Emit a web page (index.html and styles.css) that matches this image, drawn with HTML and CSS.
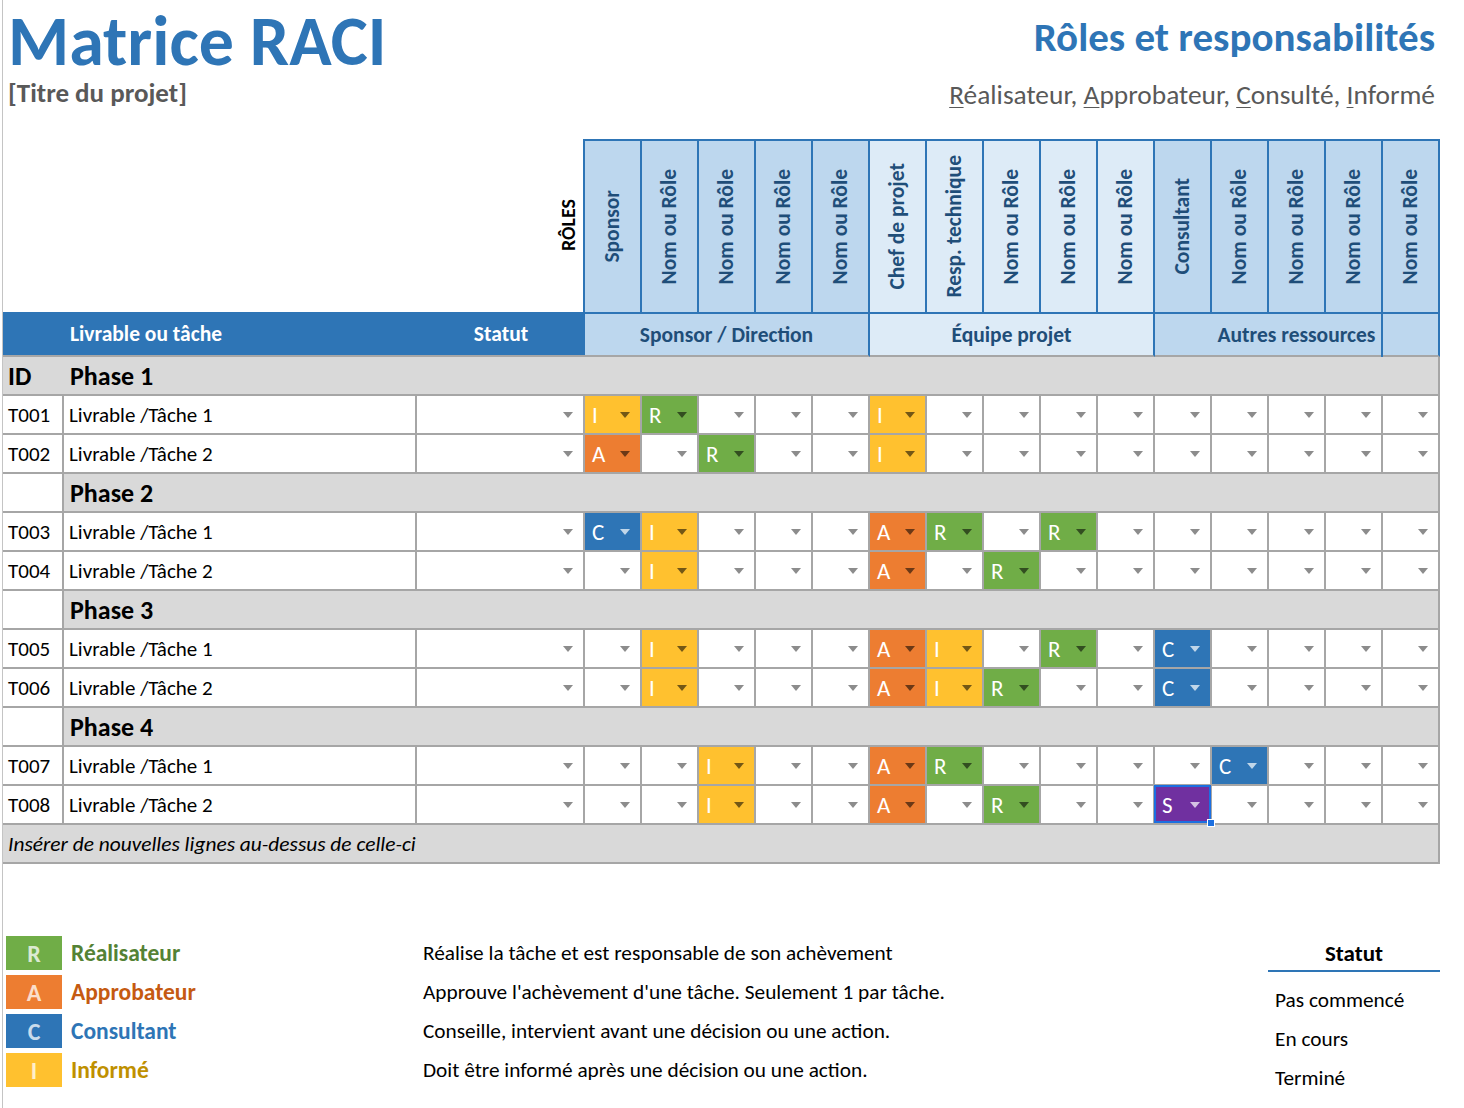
FILE: index.html
```html
<!DOCTYPE html>
<html lang="fr">
<head>
<meta charset="utf-8">
<title>Matrice RACI</title>
<link rel="stylesheet" href="styles.css">
</head>
<body>
<div class="page">
  <header class="top">
    <div class="top-left">
      <h1 class="title">Matrice RACI</h1>
      <div class="project">[Titre du projet]</div>
    </div>
    <div class="top-right">
      <h2 class="subtitle">Rôles et responsabilités</h2>
      <div class="raci-words"><u>R</u>éalisateur, <u>A</u>pprobateur, <u>C</u>onsulté, <u>I</u>nformé</div>
    </div>
  </header>

  <div class="matrix">
    <!-- role header row -->
    <div class="corner"><span class="roles-label">RÔLES</span></div>
    <div class="rh dark"><span>Sponsor</span></div>
    <div class="rh dark"><span>Nom ou Rôle</span></div>
    <div class="rh dark"><span>Nom ou Rôle</span></div>
    <div class="rh dark"><span>Nom ou Rôle</span></div>
    <div class="rh dark"><span>Nom ou Rôle</span></div>
    <div class="rh light"><span>Chef de projet</span></div>
    <div class="rh light"><span>Resp. technique</span></div>
    <div class="rh light"><span>Nom ou Rôle</span></div>
    <div class="rh light"><span>Nom ou Rôle</span></div>
    <div class="rh light"><span>Nom ou Rôle</span></div>
    <div class="rh dark"><span>Consultant</span></div>
    <div class="rh dark"><span>Nom ou Rôle</span></div>
    <div class="rh dark"><span>Nom ou Rôle</span></div>
    <div class="rh dark"><span>Nom ou Rôle</span></div>
    <div class="rh dark"><span>Nom ou Rôle</span></div>

    <!-- group row -->
    <div class="bluebar">
      <span></span>
      <span class="bb-task">Livrable ou tâche</span>
      <span class="bb-status">Statut</span>
    </div>
    <div class="grp dark">Sponsor / Direction</div>
    <div class="grp light">Équipe projet</div>
    <div class="grp dark split">Autres ressources</div>

    <!-- Phase 1 -->
    <div class="pid">ID</div>
    <div class="ph">Phase 1</div>

    <div class="c id">T001</div><div class="c task">Livrable /Tâche 1</div><div class="c dd"></div>
    <div class="c dd i">I</div><div class="c dd r">R</div><div class="c dd"></div><div class="c dd"></div><div class="c dd"></div>
    <div class="c dd i">I</div><div class="c dd"></div><div class="c dd"></div><div class="c dd"></div><div class="c dd"></div>
    <div class="c dd"></div><div class="c dd"></div><div class="c dd"></div><div class="c dd"></div><div class="c dd"></div>

    <div class="c id">T002</div><div class="c task">Livrable /Tâche 2</div><div class="c dd"></div>
    <div class="c dd a">A</div><div class="c dd"></div><div class="c dd r">R</div><div class="c dd"></div><div class="c dd"></div>
    <div class="c dd i">I</div><div class="c dd"></div><div class="c dd"></div><div class="c dd"></div><div class="c dd"></div>
    <div class="c dd"></div><div class="c dd"></div><div class="c dd"></div><div class="c dd"></div><div class="c dd"></div>

    <!-- Phase 2 -->
    <div class="pid blank"></div>
    <div class="ph">Phase 2</div>

    <div class="c id">T003</div><div class="c task">Livrable /Tâche 1</div><div class="c dd"></div>
    <div class="c dd cc">C</div><div class="c dd i">I</div><div class="c dd"></div><div class="c dd"></div><div class="c dd"></div>
    <div class="c dd a">A</div><div class="c dd r">R</div><div class="c dd"></div><div class="c dd r">R</div><div class="c dd"></div>
    <div class="c dd"></div><div class="c dd"></div><div class="c dd"></div><div class="c dd"></div><div class="c dd"></div>

    <div class="c id">T004</div><div class="c task">Livrable /Tâche 2</div><div class="c dd"></div>
    <div class="c dd"></div><div class="c dd i">I</div><div class="c dd"></div><div class="c dd"></div><div class="c dd"></div>
    <div class="c dd a">A</div><div class="c dd"></div><div class="c dd r">R</div><div class="c dd"></div><div class="c dd"></div>
    <div class="c dd"></div><div class="c dd"></div><div class="c dd"></div><div class="c dd"></div><div class="c dd"></div>

    <!-- Phase 3 -->
    <div class="pid blank"></div>
    <div class="ph">Phase 3</div>

    <div class="c id">T005</div><div class="c task">Livrable /Tâche 1</div><div class="c dd"></div>
    <div class="c dd"></div><div class="c dd i">I</div><div class="c dd"></div><div class="c dd"></div><div class="c dd"></div>
    <div class="c dd a">A</div><div class="c dd i">I</div><div class="c dd"></div><div class="c dd r">R</div><div class="c dd"></div>
    <div class="c dd cc">C</div><div class="c dd"></div><div class="c dd"></div><div class="c dd"></div><div class="c dd"></div>

    <div class="c id">T006</div><div class="c task">Livrable /Tâche 2</div><div class="c dd"></div>
    <div class="c dd"></div><div class="c dd i">I</div><div class="c dd"></div><div class="c dd"></div><div class="c dd"></div>
    <div class="c dd a">A</div><div class="c dd i">I</div><div class="c dd r">R</div><div class="c dd"></div><div class="c dd"></div>
    <div class="c dd cc">C</div><div class="c dd"></div><div class="c dd"></div><div class="c dd"></div><div class="c dd"></div>

    <!-- Phase 4 -->
    <div class="pid blank"></div>
    <div class="ph">Phase 4</div>

    <div class="c id">T007</div><div class="c task">Livrable /Tâche 1</div><div class="c dd"></div>
    <div class="c dd"></div><div class="c dd"></div><div class="c dd i">I</div><div class="c dd"></div><div class="c dd"></div>
    <div class="c dd a">A</div><div class="c dd r">R</div><div class="c dd"></div><div class="c dd"></div><div class="c dd"></div>
    <div class="c dd"></div><div class="c dd cc">C</div><div class="c dd"></div><div class="c dd"></div><div class="c dd"></div>

    <div class="c id">T008</div><div class="c task">Livrable /Tâche 2</div><div class="c dd"></div>
    <div class="c dd"></div><div class="c dd"></div><div class="c dd i">I</div><div class="c dd"></div><div class="c dd"></div>
    <div class="c dd a">A</div><div class="c dd"></div><div class="c dd r">R</div><div class="c dd"></div><div class="c dd"></div>
    <div class="c dd s">S<span class="selbox"></span><span class="handle"></span></div><div class="c dd"></div><div class="c dd"></div><div class="c dd"></div><div class="c dd"></div>

    <div class="ins">Insérer de nouvelles lignes au-dessus de celle-ci</div>
  </div>

  <section class="legend">
    <div class="lg-list">
      <div class="lg-row"><span class="lg-box r">R</span><span class="lg-name t-r">Réalisateur</span><span class="lg-desc">Réalise la tâche et est responsable de son achèvement</span></div>
      <div class="lg-row"><span class="lg-box a">A</span><span class="lg-name t-a">Approbateur</span><span class="lg-desc">Approuve l'achèvement d'une tâche. Seulement 1 par tâche.</span></div>
      <div class="lg-row"><span class="lg-box cc">C</span><span class="lg-name t-c">Consultant</span><span class="lg-desc">Conseille, intervient avant une décision ou une action.</span></div>
      <div class="lg-row"><span class="lg-box i">I</span><span class="lg-name t-i">Informé</span><span class="lg-desc">Doit être informé après une décision ou une action.</span></div>
    </div>
    <div class="status">
      <div class="st-head">Statut</div>
      <div class="st-item">Pas commencé</div>
      <div class="st-item">En cours</div>
      <div class="st-item">Terminé</div>
    </div>
  </section>
</div>
</body>
</html>
```

FILE: styles.css
```css
* { box-sizing: border-box; margin: 0; padding: 0; }

body {
  font-family: Carlito, Calibri, Lato, "Liberation Sans", sans-serif;
  color: #000;
  background: #fff;
}

.page {
  margin-left: 2px;
  border-left: 1px solid #c4c4c4;
  min-height: 1108px;
}

/* ---------- top header ---------- */
.top {
  height: 139px;
  display: flex;
  justify-content: space-between;
  padding: 0 29px 0 5px;
}
.title {
  font-size: 70px;
  font-weight: 700;
  color: #2E75B6;
  line-height: 72px;
  margin-top: 5px;
}
.project {
  font-size: 27px;
  font-weight: 700;
  color: #595959;
  line-height: 30px;
  margin-top: 1px;
}
.top-right { text-align: right; }
.subtitle {
  font-size: 41px;
  font-weight: 700;
  color: #2E75B6;
  line-height: 44px;
  margin-top: 15px;
}
.raci-words {
  font-size: 27.4px;
  color: #595959;
  line-height: 28px;
  margin-top: 22px;
}
.raci-words u { text-underline-offset: 3px; text-decoration-thickness: 1px; }

/* ---------- matrix ---------- */
.matrix {
  display: grid;
  grid-template-columns: 61px 353px 168px repeat(15, 57px);
  grid-template-rows: 173px 45px repeat(13, 39px);
  width: 1437px;
}

.corner {
  grid-column: 1 / 4;
  border-right: 2px solid #2E75B6;
  display: flex;
  align-items: center;
  justify-content: flex-end;
  padding-right: 5px;
}
.roles-label {
  writing-mode: vertical-rl;
  transform: rotate(180deg);
  font-weight: 700;
  font-size: 20px;
  line-height: 1;
}

.rh {
  border-top: 2px solid #2E75B6;
  border-right: 2px solid #2E75B6;
  display: flex;
  align-items: center;
  justify-content: center;
}
.rh span {
  writing-mode: vertical-rl;
  transform: rotate(180deg);
  font-weight: 700;
  font-size: 21.5px;
  color: #1F4E79;
  line-height: 1;
  white-space: nowrap;
}
.dark { background: #BDD7EE; }
.light { background: #DDEBF7; }

.bluebar {
  grid-column: 1 / 4;
  background: #2E75B6;
  color: #fff;
  font-weight: 700;
  font-size: 21.5px;
  display: grid;
  grid-template-columns: 61px 353px 168px;
  align-items: center;
  border-bottom: 2px solid #a6a6a6;
}
.bb-task { padding-left: 6px; }
.bb-status { text-align: center; }

.grp {
  grid-column: span 5;
  border-top: 2px solid #2E75B6;
  border-right: 2px solid #2E75B6;
  border-bottom: 2px solid #a6a6a6;
  display: flex;
  align-items: center;
  justify-content: center;
  font-weight: 700;
  font-size: 21.5px;
  color: #1F4E79;
  position: relative;
}
.grp.split::after {
  content: "";
  position: absolute;
  top: 0;
  bottom: -2px;
  left: 226px;
  width: 2px;
  background: #2E75B6;
}

.pid {
  background: #D9D9D9;
  border-bottom: 2px solid #a6a6a6;
  font-weight: 700;
  font-size: 26px;
  display: flex;
  align-items: center;
  padding-left: 5px;
}
.pid.blank {
  background: #fff;
  border-right: 2px solid #a6a6a6;
}
.ph {
  grid-column: 2 / -1;
  background: #D9D9D9;
  border-bottom: 2px solid #a6a6a6;
  border-right: 2px solid #a6a6a6;
  font-weight: 700;
  font-size: 26px;
  display: flex;
  align-items: center;
  padding-left: 6px;
}

.c {
  border-right: 2px solid #a6a6a6;
  border-bottom: 2px solid #a6a6a6;
  display: flex;
  align-items: center;
  padding-left: 5px;
  font-size: 21px;
  position: relative;
  background: #fff;
}
.c.dd { font-size: 23px; color: #fff; padding-left: 7px; }
.dd::after {
  content: "";
  position: absolute;
  right: 10px;
  top: 50%;
  margin-top: -3px;
  border-left: 5px solid transparent;
  border-right: 5px solid transparent;
  border-top: 6px solid #8c8c8c;
}
.c.i { background: #FFC12F; }
.c.a { background: #ED7D31; }
.c.r { background: #70AD47; }
.c.cc { background: #2E75B6; }
.c.s { background: #7030A0; overflow: visible; }
.c.i::after, .c.a::after, .c.r::after { border-top-color: rgba(0, 0, 0, 0.55); }
.c.cc::after, .c.s::after { border-top-color: rgba(255, 255, 255, 0.7); }

.selbox {
  position: absolute;
  left: -1px;
  top: -1px;
  right: -1px;
  bottom: 0;
  border: 2px solid #1C6FE0;
  pointer-events: none;
}
.handle {
  position: absolute;
  right: -5px;
  bottom: -4px;
  width: 8px;
  height: 8px;
  background: #1C6FE0;
  border: 1px solid #fff;
  z-index: 2;
}

.ins {
  grid-column: 1 / -1;
  background: #D9D9D9;
  border-bottom: 2px solid #a6a6a6;
  border-right: 2px solid #a6a6a6;
  font-style: italic;
  font-size: 21.4px;
  display: flex;
  align-items: center;
  padding-left: 5px;
}

/* ---------- legend ---------- */
.legend {
  display: flex;
  justify-content: space-between;
  padding: 72px 24px 0 3px;
}
.lg-row {
  display: grid;
  grid-template-columns: 56px 361px auto;
  align-items: center;
  height: 34px;
  margin-bottom: 5px;
}
.lg-box {
  height: 34px;
  display: flex;
  align-items: center;
  justify-content: center;
  font-weight: 700;
  font-size: 24px;
  color: rgba(255, 255, 255, 0.75);
}
.lg-box.r { background: #70AD47; }
.lg-box.a { background: #ED7D31; }
.lg-box.cc { background: #2E75B6; }
.lg-box.i { background: #FFC12F; }
.lg-name {
  padding-left: 9px;
  font-weight: 700;
  font-size: 23.5px;
}
.t-r { color: #548235; }
.t-a { color: #C55A11; }
.t-c { color: #2E75B6; }
.t-i { color: #BF9000; }
.lg-desc { font-size: 21.3px; }

.status { width: 172px; }
.st-head {
  height: 36px;
  border-bottom: 2px solid #2E75B6;
  display: flex;
  align-items: center;
  justify-content: center;
  font-weight: 700;
  font-size: 23px;
}
.st-item {
  height: 39px;
  display: flex;
  align-items: center;
  padding-left: 7px;
  font-size: 21.3px;
}
.st-head + .st-item { margin-top: 8px; }
```
